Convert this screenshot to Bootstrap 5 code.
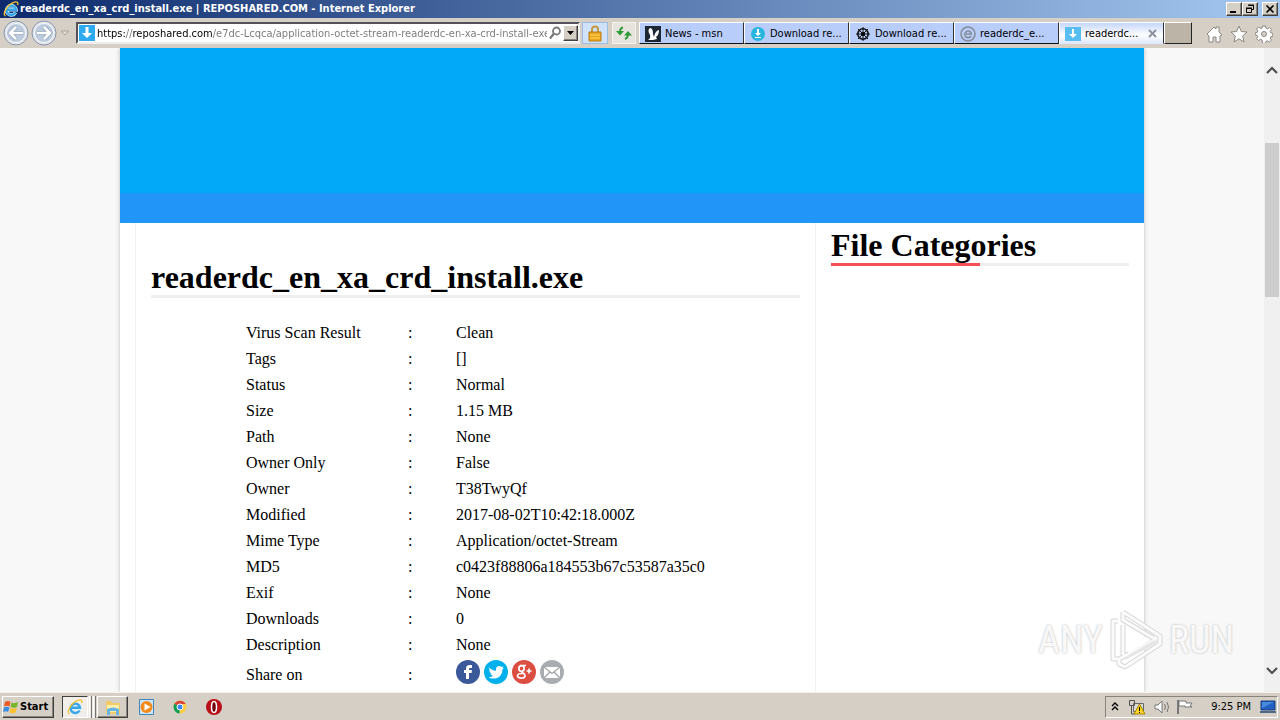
<!DOCTYPE html>
<html lang="en">
<head>
<meta charset="utf-8">
<meta name="viewport" content="width=device-width, initial-scale=1">
<title>readerdc_en_xa_crd_install.exe | REPOSHARED.COM</title>
<link href="https://cdn.jsdelivr.net/npm/bootstrap@5.3.0/dist/css/bootstrap.min.css" rel="stylesheet">
<style>
:root{--face:#d6cfc6;--ui:"DejaVu Sans Condensed","Noto Sans",sans-serif}
body{font-family:var(--ui);font-size:11px;line-height:16px;color:#000;background:#f8f8f8}
button{font-family:inherit;font-size:inherit;line-height:inherit;color:inherit;padding:0;border:0;background:none}
svg{display:block;flex:none}
.titlebar{height:18px;background:linear-gradient(90deg,#0c2a6c,#a4c8f0);color:#fff;font-weight:bold;padding:0 2px 0 3px;gap:1px}
.caption-btn{width:16px;height:14px;background:var(--face);display:flex;align-items:center;justify-content:center}
.raised{border:1px solid;border-color:#fff #404040 #404040 #fff;box-shadow:inset -1px -1px #88847c}
.toolbar{height:30px;background:var(--face);padding-left:3px}
.address{height:22px;background:#fff;border:2px solid;border-color:#55505a #eee #eee #55505a;padding-left:1px;gap:2px}
.address input{border:0;outline:0;padding:1px 0 0;min-width:0;height:18px;line-height:17px;color:transparent;background:linear-gradient(90deg,#000 29px,#777 29px,#777 36px,#000 36px,#000 116px,#777 116px);-webkit-background-clip:text;background-clip:text;caret-color:#000}
.drop{width:15px;height:16px;background:var(--face)}
.toolbtn{width:24px;height:22px;border:1px solid #f4f2ee;background:#e6e4dd}
.toolbtn.lock{width:26px;margin-left:2px;border-color:#9cbce0;background:#cfe2fa}
.pages{margin-left:3px}
.page-tab{width:105px;height:22px;background:#b9cdfb;border:1px solid;border-color:#fff #303030 #111 #fff;padding:1px 4px 0 5px;gap:4px;text-align:left}
.page-tab.current{background:linear-gradient(#c5d6fa,#fff 60%,#dfe8fc);border-bottom-color:#dfe8fc}
.newtab{width:28px;height:22px;background:#bdb4a8;border:1px solid;border-color:#fff #222 #222 #fff}
.tools{gap:7px;padding:2px 7px 0 14px}
.site{max-width:1024px;background:#fff;box-shadow:0 0 4px #bbb;font-family:"Liberation Serif",serif;font-size:16px}
.hero{height:145px;background:#03a9f9}
.stripe{height:30px;background:#2196f8}
.col-main{margin-left:15px;flex:0 0 681px;max-width:67%;border:1px solid #f0f0f0;border-width:0 1px;padding:36px 15px 0}
.col-side{padding:4px 15px 0}
h1,.side-title{font-size:32px;line-height:36px;font-weight:bold;margin:0;border-bottom:3px solid #eee}
.side-title{position:relative}
.side-title::after{content:"";position:absolute;left:0;bottom:-3px;width:50%;height:3px;background:#f85058}
.facts{margin:22px 0 0 95px}
.facts th,.facts td{font-weight:normal;height:26px;padding:0;line-height:26px}
.facts th{width:162px}
.facts .sep{width:48px}
.share{gap:4px;padding:2px 0 8px}
.scroller{width:16px;background:#f0f0f0;padding:14px 0 14px}
.thumb{height:154px;width:14px;margin:66px 0 0 1px;background:#cdcdcd}
.watermark{position:absolute;right:46px;bottom:20px;font:38px/64px "Liberation Sans Narrow","Roboto Condensed",Roboto,sans-serif;color:#f8f8f8;text-shadow:0 0 2px #c8c8c8,0 0 3px #ddd;gap:3px}
.taskbar{height:28px;background:var(--face);border-top:1px solid #f4f1ec;padding:3px 2px 2px}
.start{width:52px;height:22px;font-weight:bold;gap:1px}
.task{height:22px}
.task.raised{width:31px;padding:0 7px}
.pressed{border:1px solid;border-color:#404040 #fff #fff #404040;background:#f1eeea}
.launch{gap:16px;margin-left:11px}
.tray{width:173px;height:22px;border:1px solid;border-color:#88847c #fff #fff #88847c;padding:0 0 0 4px}
</style>
</head>
<body class="vh-100 d-flex flex-column overflow-hidden">
<svg width="0" height="0" class="position-absolute" aria-hidden="true">
<defs>
<symbol id="ie" viewBox="0 0 16 16"><path d="M12.500 11.500A4.700 4.700 0 1 1 13 8.800H4.500" fill="none" stroke="#d8f0fc" stroke-width="3.600"/><path d="M12.500 11.500A4.700 4.700 0 1 1 13 8.800H4.500" fill="none" stroke="#38a5e8" stroke-width="2.400"/><path d="M2.500 15C-1.500 13 5 3 11.500 1.200c3-.8 4 .5 3 2.800" fill="none" stroke="#f4c52c" stroke-width="1.300"/></symbol>
<symbol id="down" viewBox="0 0 16 16"><path fill="#2faaf0" d="M0 0h16v16H0z"/><path fill="#fff" d="M6.500 2h3v6H13l-5 5-5-5h3.500z"/></symbol>
<symbol id="downpale" viewBox="0 0 16 16"><path fill="#58bdf0" d="M0 1h16v14H0z"/><path fill="#fff" d="M7 3h2v5h3l-4 4-4-4h3z"/></symbol>
</defs></svg>

<header class="flex-shrink-0">
<div class="titlebar d-flex align-items-center">
<svg width="16" height="16"><use href="#ie"/></svg>
<span class="text-truncate flex-grow-1">readerdc_en_xa_crd_install.exe | REPOSHARED.COM - Internet Explorer</span>
<div class="d-flex">
<button class="caption-btn raised" aria-label="Minimize"><svg width="10" height="10"><path d="M1 7h6v2H1z"/></svg></button>
<button class="caption-btn raised" aria-label="Restore"><svg width="10" height="10"><path d="M3.500 1.500h5v4h-2M3 1h6M1.500 4.500h5v4h-5zM1 4h6" fill="none" stroke="#000"/></svg></button>
<button class="caption-btn raised ms-1" aria-label="Close"><svg width="10" height="10"><path d="M1.500 1.500l7 7m0-7l-7 7" stroke="#000" stroke-width="1.600"/></svg></button>
</div>
</div>
<div class="toolbar d-flex align-items-center">
<button aria-label="Back"><svg width="27" height="28"><circle cx="13" cy="14" r="12" fill="#e2e6ec" stroke="#8795aa"/><circle cx="13" cy="14" r="9.500" fill="#bccadd" stroke="#f4f7fa"/><path d="M20 14H8m5-6l-6 6 6 6" fill="none" stroke="#8fa0b8" stroke-width="4"/><path d="M20 14H8m5-6l-6 6 6 6" fill="none" stroke="#fff" stroke-width="2.600"/></svg></button>
<button aria-label="Forward"><svg width="27" height="28"><circle cx="14" cy="14" r="12" fill="#e2e6ec" stroke="#8795aa"/><circle cx="14" cy="14" r="9.500" fill="#bccadd" stroke="#f4f7fa"/><path d="M7 14h12m-5-6l6 6-6 6" fill="none" stroke="#8fa0b8" stroke-width="4"/><path d="M7 14h12m-5-6l6 6-6 6" fill="none" stroke="#fff" stroke-width="2.600"/></svg></button>
<button aria-label="Recent pages"><svg width="19" height="20"><path d="M4 8h8l-4 4z" fill="#e0dcd5" stroke="#a9a49c"/></svg></button>
<div class="address d-flex align-items-center flex-grow-1">
<svg width="16" height="16"><use href="#down"/></svg>
<input type="text" class="flex-grow-1" aria-label="Address" value="https://reposhared.com/e7dc-Lcqca/application-octet-stream-readerdc-en-xa-crd-install-exe">
<button aria-label="Search"><svg width="12" height="18"><circle cx="7.500" cy="7" r="3.500" fill="none" stroke="#777" stroke-width="1.800"/><path d="M5 9.500l-4 5" stroke="#777" stroke-width="2.200"/></svg></button>
<button class="drop raised d-flex align-items-center justify-content-center" aria-label="Show address list"><svg width="7" height="4"><path d="M0 0h7L3.500 4z"/></svg></button>
</div>
<button class="toolbtn lock d-flex align-items-center justify-content-center" aria-label="Security report"><svg width="14" height="17"><path d="M4 8V4.500a3 3 0 0 1 6 0V8" fill="none" stroke="#c69a42" stroke-width="2"/><path d="M1 7h12v9H1z" fill="#eaa91f" stroke="#b87a10"/><path d="M2 10h10M2 13h10" stroke="#ffd35c"/></svg></button>
<button class="toolbtn ms-1 d-flex align-items-center justify-content-center" aria-label="Refresh"><svg width="18" height="16"><path d="M8 2.500Q5 3 5 7M10 14q3-1 3-5" fill="none" stroke="#2f9a3a" stroke-width="2"/><path d="M1 6h8l-4 4.500zM9 10.500h8L13 6z" fill="#2f9a3a"/></svg></button>
<nav class="pages d-flex" aria-label="Open pages">
<button class="page-tab d-flex align-items-center"><svg width="16" height="16"><path fill="#1d2733" d="M0 0h16v16H0z"/><path fill="#fff" d="M3 14q3-2 2-5Q2 4 5 2q3 0 3 6l1 3q1-6 5-7 0 5-3 7l1 2-4 1z"/></svg><span class="text-nowrap">News - msn</span></button>
<button class="page-tab d-flex align-items-center"><svg width="16" height="16"><circle cx="8" cy="8" r="7" fill="#28b6df"/><path d="M7 3h2v4h2L8 10 5 7h2zM5 11h6v1H5z" fill="#fff"/></svg><span class="text-nowrap">Download re...</span></button>
<button class="page-tab d-flex align-items-center"><svg width="16" height="16"><g fill="none" stroke="#111"><circle cx="8" cy="8" r="5.200" stroke-width="1.600"/><path d="M8 1v14M1 8h14M3 3l10 10M13 3L3 13"/></g><circle cx="8" cy="8" r="2"/></svg><span class="text-nowrap">Download re...</span></button>
<button class="page-tab d-flex align-items-center"><svg width="16" height="16"><g fill="none" stroke="#858d98" stroke-width="1.600"><circle cx="8" cy="8" r="7"/><path d="M11 10a3.300 3.300 0 1 1 .4-2H6"/></g></svg><span class="text-nowrap">readerdc_e...</span></button>
<button class="page-tab current d-flex align-items-center"><svg width="16" height="16"><use href="#downpale"/></svg><span class="text-nowrap flex-grow-1">readerdc...</span><svg width="11" height="9"><path d="M1 1l7 7m0-7L1 8" stroke="#8d939e" stroke-width="2"/></svg></button>
<button class="newtab" aria-label="New tab"></button>
</nav>
<div class="tools d-flex">
<button aria-label="Home"><svg width="17" height="18"><path d="M1 9l7-7 2 2V2h3v5l3 3-2 1v6h-4v-5H7v5H3v-6z" fill="#fff" stroke="#8b8882"/></svg></button>
<button aria-label="Favorites"><svg width="18" height="18"><path d="M9 1l2.300 5.500 5.700.5-4.300 4 1.300 6-5-3.200L4 17l1.300-6L1 7l5.700-.5z" fill="#fff" stroke="#8b8882"/></svg></button>
<button aria-label="Tools"><svg width="18" height="18"><path d="M7.500 1h3l.5 2.200 1.500.6L14.500 2.600l1.900 1.900-1.200 2 .6 1.300 2 .5v3l-2 .5-.6 1.400 1.200 1.900-1.900 1.900-2-1.200-1.500.6-.5 1.900h-3L7 14.900l-1.500-.6-2 1.200-1.900-1.900 1.200-1.900-.6-1.400-2-.5v-2l2-.5.6-1.400-1.200-1.900 1.900-1.900 2 1.200L7 3.200z" fill="#fff" stroke="#8b8882"/><circle cx="9" cy="9" r="2.500" fill="#d6cfc6" stroke="#8b8882"/></svg></button>
</div>
</div>
</header>

<div class="d-flex flex-grow-1 position-relative overflow-hidden">
<div class="flex-grow-1 overflow-hidden">
<main class="site mx-auto d-flex flex-column h-100">
<div class="hero flex-shrink-0"></div>
<div class="stripe flex-shrink-0"></div>
<div class="d-flex flex-grow-1">
<section class="col-main">
<h1>readerdc_en_xa_crd_install.exe</h1>
<table class="facts">
<tr><th scope="row">Virus Scan Result</th><td class="sep">:</td><td>Clean</td></tr>
<tr><th scope="row">Tags</th><td>:</td><td>[]</td></tr>
<tr><th scope="row">Status</th><td>:</td><td>Normal</td></tr>
<tr><th scope="row">Size</th><td>:</td><td>1.15 MB</td></tr>
<tr><th scope="row">Path</th><td>:</td><td>None</td></tr>
<tr><th scope="row">Owner Only</th><td>:</td><td>False</td></tr>
<tr><th scope="row">Owner</th><td>:</td><td>T38TwyQf</td></tr>
<tr><th scope="row">Modified</th><td>:</td><td>2017-08-02T10:42:18.000Z</td></tr>
<tr><th scope="row">Mime Type</th><td>:</td><td>Application/octet-Stream</td></tr>
<tr><th scope="row">MD5</th><td>:</td><td>c0423f88806a184553b67c53587a35c0</td></tr>
<tr><th scope="row">Exif</th><td>:</td><td>None</td></tr>
<tr><th scope="row">Downloads</th><td>:</td><td>0</td></tr>
<tr><th scope="row">Description</th><td>:</td><td>None</td></tr>
<tr><th scope="row">Share on</th><td>:</td><td><div class="share d-flex">
<a href="#" aria-label="Facebook"><svg width="24" height="24"><circle cx="12" cy="12" r="12" fill="#3b5998"/><path fill="#fff" d="M10 19v-6H8v-3h2V8.500C10 6 11.500 5 13.500 5H16v3h-1.500c-1 0-1.500.4-1.500 1.200V10h3l-.5 3H13v6z"/></svg></a>
<a href="#" aria-label="Twitter"><svg width="24" height="24"><circle cx="12" cy="12" r="12" fill="#00b0ed"/><path fill="#fff" d="M5 7.500c2 2 4 3 7 3.200C11.500 8 13 6 15.200 6c1 0 1.800.4 2.400 1l2-.8-1.300 1.900 1.700-.4-1.600 1.700C18.500 15 14.500 18.500 9.700 18.500c-2 0-3.700-.5-5.200-1.500 1.800.2 3.400-.3 4.700-1.300-1.500-.1-2.400-1-2.800-2.200h1.400C6.200 12.900 5.300 11.700 5.300 10l1.400.4C5.200 9.400 4.600 8.500 5 7.500z"/></svg></a>
<a href="#" aria-label="Google+"><svg width="24" height="24"><circle cx="12" cy="12" r="12" fill="#dc4e41"/><g fill="none" stroke="#fff" stroke-width="1.700"><ellipse cx="9.500" cy="8.500" rx="2.600" ry="2.900"/><path d="M8.500 5.500H14M10 11.500c-1 1 3 2 3 4 0 3.600-7.500 3.500-7.500.3 0-1.800 2-2.300 5-2.300M14.500 11h5M17 8.500v5"/></g></svg></a>
<a href="#" aria-label="Email"><svg width="24" height="24"><circle cx="12" cy="12" r="12" fill="#a9adb0"/><path fill="#fff" d="M4 7h16v11H4z"/><path d="M4 7l8 6.500L20 7M4 18l6-6m10 6l-6-6" fill="none" stroke="#a0a4a7" stroke-width="1.300"/></svg></a>
</div></td></tr>
</table>
</section>
<aside class="col-side flex-grow-1"><h2 class="side-title">File Categories</h2></aside>
</div>
</main>
</div>
<div class="scroller flex-shrink-0">
<svg width="16" height="15"><path d="M3 11l5-5 5 5" fill="none" stroke="#505050" stroke-width="2.200"/></svg>
<div class="thumb"></div>
<svg width="16" height="15" class="position-absolute bottom-0 mb-3"><path d="M3 7l5 5 5-5" fill="none" stroke="#505050" stroke-width="2.200"/></svg>
</div>
<div class="watermark d-flex align-items-center"><span>ANY</span>
<svg width="60" height="64"><g fill="none" stroke-linejoin="round"><path d="M12 13H7v38h5M17 4v8l30 18M17 4l37 24v8L19 59l-6-3v-5l34-18M17 17v30" stroke="#d6d6d6" stroke-width="5"/><path d="M12 13H7v38h5M17 4v8l30 18M17 4l37 24v8L19 59l-6-3v-5l34-18M17 17v30" stroke="#fbfbfb" stroke-width="3"/></g><path d="M19 33v19l33-17v-3L47 33 19 49z" fill="#e6e6e6"/><path d="M22 19l23 13-23 13z" fill="#fff"/></svg>
<span>RUN</span></div>
</div>

<footer class="taskbar d-flex align-items-center flex-shrink-0">
<button class="start raised d-flex align-items-center"><svg width="16" height="16"><path d="M2 3q3-2 5.500 0L6.500 7.500Q4 6 1 7.500z" fill="#ec5a25"/><path d="M8.500 3.500Q11 5 15 3l-1 5q-3 1.500-6.500 0z" fill="#79b52b"/><path d="M1 8.500q3-1.500 5.500 0L5 13q-2-1.500-5 0z" fill="#3a8fe0"/><path d="M7.500 9Q10 10.500 14 9l-1.500 4.500q-3 1.500-6 0z" fill="#fbc22b"/></svg>Start</button>
<button class="task pressed ms-2 px-1 d-flex align-items-center" aria-label="Internet Explorer"><svg width="16" height="18"><use href="#ie"/></svg></button>
<svg width="9" height="22"><path d="M1.500 0v22M5.500 0v22" stroke="#fff" stroke-width="2"/><path d="M3.500 0v22M7.500 0v22" stroke="#77736c"/></svg>
<button class="task raised d-flex align-items-center" aria-label="File Explorer"><svg width="16" height="18"><path d="M1 3h5l1 2h8v11H1z" fill="#f1cb67"/><path d="M2 7h12v7H2z" fill="#fff0a9"/><path d="M2 17v-6q6-3 12 0v6h-3v-4H5v4z" fill="#68b4e5"/></svg></button>
<div class="launch d-flex">
<button aria-label="Media Player"><svg width="16" height="18"><path d="M.5 1.500h14v15H.5z" fill="#cce6fb" stroke="#4285bd"/><circle cx="7.500" cy="9" r="6" fill="#f28b1c"/><path d="M5.500 5.500l6 3.500-6 3.500z" fill="#fff"/></svg></button>
<button aria-label="Chrome"><svg width="18" height="18"><circle cx="9" cy="9" r="6.500" fill="#ffcd40"/><path d="M9 9L3.400 5.700A6.500 6.500 0 0 1 14.600 6H9z" fill="#db4437"/><path d="M9 9l-.5 6.500A6.500 6.500 0 0 1 3.400 5.700z" fill="#0f9d58"/><circle cx="9" cy="9" r="3" fill="#4285f4" stroke="#fff"/></svg></button>
<button aria-label="Opera"><svg width="18" height="18"><circle cx="9" cy="9" r="8" fill="#b80f19"/><ellipse cx="9" cy="9" rx="2.500" ry="5.500" fill="#720008" stroke="#fff" stroke-width="1.500"/></svg></button>
</div>
<div class="tray ms-auto d-flex align-items-center">
<button aria-label="Show hidden icons"><svg width="10" height="12"><path d="M2 5l3-3 3 3M2 9l3-3 3 3" fill="none" stroke="#000" stroke-width="1.400"/></svg></button>
<svg width="18" height="16" class="ms-2"><path d="M5.500 4.500h10v8h-10z" fill="#d9d9d5" stroke="#666"/><path d="M1.500 1.500h5v5h-5zM3.500 6v9h3" fill="none" stroke="#555"/><path d="M11.500 5L17 15H6z" fill="#ffd51f" stroke="#a78700"/><path d="M11 8h1v4h-1zM11 13h1v1h-1z"/></svg>
<svg width="18" height="16" class="ms-2"><path d="M1 6h3l4-4v12l-4-4H1z" fill="#fff" stroke="#777"/><path d="M10.500 5q2 3 0 6M13 3q3 5 0 10" fill="none" stroke="#777"/></svg>
<svg width="18" height="16" class="ms-1"><path d="M2 1v14" stroke="#777" stroke-width="2"/><path d="M3 2h7v2h6l-2 3 2 1h-7V7H3z" fill="#fff" stroke="#777"/></svg>
<span class="ms-auto me-2 text-nowrap">9:25 PM</span>
<svg width="18" height="16"><path d="M2 2h14v9H2z" fill="#235fc0" stroke="#183c78"/><path d="M3 3h12L3 9z" fill="#478bdd"/><path d="M1 12h16v2H1z" fill="#506984"/></svg>
</div>
</footer>
<script src="https://cdn.jsdelivr.net/npm/bootstrap@5.3.0/dist/js/bootstrap.bundle.min.js"></script>
</body>
</html>
